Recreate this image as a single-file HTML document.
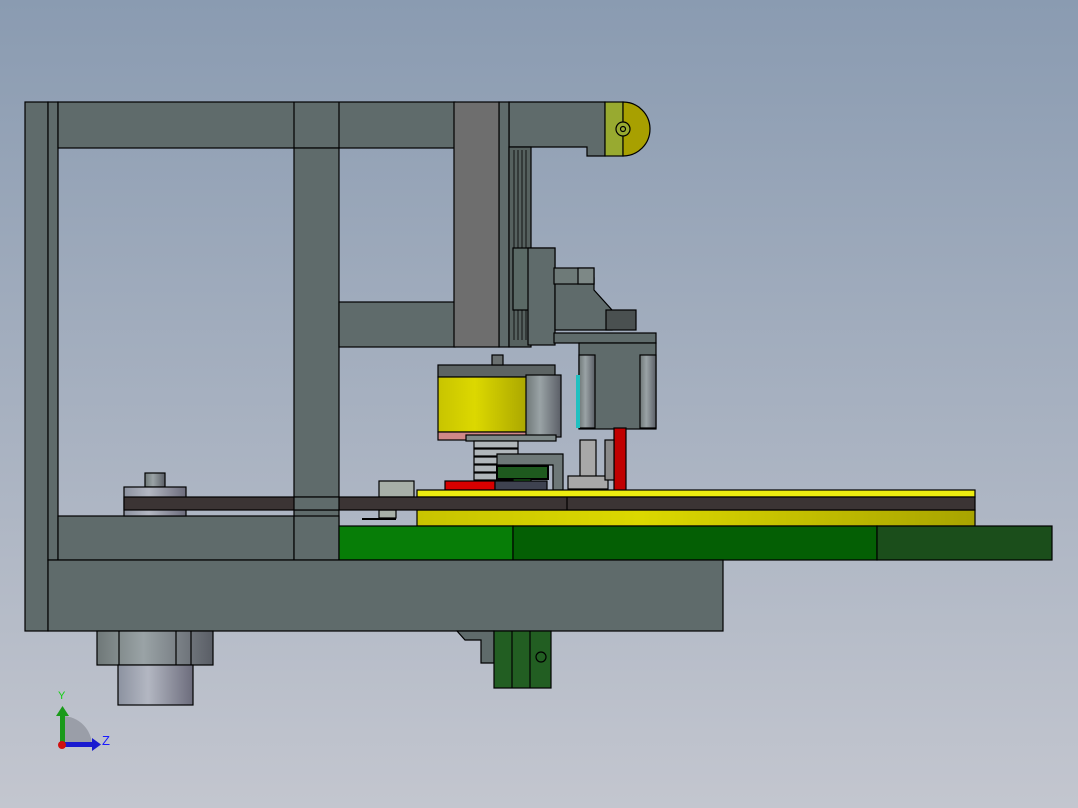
<!DOCTYPE html>
<html><head><style>html,body{margin:0;padding:0;width:1078px;height:808px;overflow:hidden}</style></head>
<body>
<svg width="1078" height="808" viewBox="0 0 1078 808" xmlns="http://www.w3.org/2000/svg" stroke="#000" stroke-width="1.2">
<defs>
<linearGradient id="bg" x1="0" y1="0" x2="0" y2="1"><stop offset="0" stop-color="#8a9bb1"/><stop offset="1" stop-color="#c3c6cf"/></linearGradient>
<linearGradient id="yel" x1="0" y1="0" x2="1" y2="0"><stop offset="0" stop-color="#c8c400"/><stop offset="0.4" stop-color="#dcd800"/><stop offset="1" stop-color="#a8a400"/></linearGradient>
<linearGradient id="cyl" x1="0" y1="0" x2="1" y2="0"><stop offset="0" stop-color="#6f7878"/><stop offset="0.4" stop-color="#9aa3a6"/><stop offset="1" stop-color="#5a5e66"/></linearGradient>
<linearGradient id="cyl2" x1="0" y1="0" x2="1" y2="0"><stop offset="0" stop-color="#8c92a0"/><stop offset="0.4" stop-color="#b3b7c2"/><stop offset="1" stop-color="#6c6c7c"/></linearGradient>
</defs>
<rect width="1078" height="808" fill="url(#bg)" stroke="none"/>
<g fill="#5f6b6b">
<rect x="25" y="102" width="23" height="529"/>
<rect x="48" y="102" width="10" height="458"/>
<rect x="58" y="102" width="397" height="46"/>
<line x1="294" y1="102" x2="294" y2="148"/><line x1="339" y1="102" x2="339" y2="148"/>
<rect x="294" y="148" width="45" height="412"/>
<rect x="339" y="302" width="116" height="45"/>
<path d="M509 102 H605 V156 H587 V147 H509 Z"/>
<rect x="499" y="102" width="10" height="245"/>
<rect x="509" y="147" width="22" height="200" fill="#56615f"/>
<rect x="58" y="516" width="236" height="44"/>
<rect x="294" y="516" width="45" height="44"/>
</g>
<rect x="454" y="102" width="45" height="245" fill="#6e6e6e"/>
<g stroke-width="0.8"><line x1="514" y1="150" x2="514" y2="340"/><line x1="518" y1="150" x2="518" y2="340"/><line x1="522" y1="150" x2="522" y2="340"/><line x1="526" y1="150" x2="526" y2="340"/></g>
<rect x="605" y="102" width="18" height="54" fill="#98aa30"/>
<path d="M623 102 A27 27 0 0 1 623 156 Z" fill="#a8a000"/>
<circle cx="623" cy="129" r="7" fill="#98aa30"/><circle cx="623" cy="129" r="2.5" fill="none"/>
<!-- slider block -->
<rect x="513" y="248" width="42" height="62" fill="#5b6a66"/>
<rect x="528" y="248" width="27" height="97" fill="#5f6b6b"/>
<path d="M555 278 H594 V290 L612 310 V330 H555 Z" fill="#5f6b6b"/>
<rect x="554" y="268" width="40" height="16" fill="#6e7a78"/>
<rect x="578" y="268" width="16" height="16" fill="#7d8886"/>
<rect x="606" y="310" width="30" height="20" fill="#4a5050"/>
<rect x="554" y="333" width="102" height="10" fill="#5f6b6b"/>
<rect x="579" y="343" width="77" height="86" fill="#5f6b6b"/>
<rect x="579" y="355" width="16" height="73" fill="url(#cyl)"/><rect x="640" y="355" width="16" height="73" fill="url(#cyl)"/>
<rect x="576" y="375" width="4" height="53" fill="#20c0c0" stroke="none"/>
<!-- motor -->
<rect x="438" y="365" width="117" height="12" fill="#5d6464"/>
<rect x="438" y="377" width="92" height="55" fill="url(#yel)"/>
<rect x="438" y="432" width="92" height="8" fill="#d08888"/>
<rect x="526" y="375" width="35" height="62" fill="url(#cyl)"/>
<rect x="492" y="355" width="11" height="10" fill="#6a7070"/>
<rect x="466" y="435" width="90" height="6" fill="#7f8a8a"/>
<g fill="#b0b6ba"><rect x="474" y="441" width="44" height="7"/><rect x="474" y="449" width="44" height="7"/><rect x="474" y="457" width="44" height="7"/><rect x="474" y="465" width="44" height="7"/><rect x="474" y="473" width="44" height="7"/><rect x="474" y="481" width="44" height="8"/></g>
<path d="M497 454 H563 V490 H553 V465 H497 Z" fill="#6e7878"/>
<rect x="497" y="466" width="51" height="13" fill="#1e5a1e" stroke-width="2"/>
<rect x="513" y="479" width="18" height="12" fill="#2a8a2a"/>
<rect x="445" y="481" width="50" height="9" fill="#d80000"/>
<rect x="495" y="481" width="52" height="9" fill="#3e4250"/>
<!-- bracket -->
<rect x="580" y="440" width="16" height="45" fill="#a8a8a8"/>
<rect x="568" y="476" width="40" height="13" fill="#a8a8a8"/>
<rect x="614" y="428" width="12" height="64" fill="#c00000"/>
<rect x="605" y="440" width="9" height="40" fill="#8a8a8a"/>
<!-- left clamp -->
<rect x="379" y="481" width="35" height="16" fill="#a8b0a8"/>
<rect x="379" y="510" width="17" height="8" fill="#a8b0a8"/>
<line x1="362" y1="519" x2="396" y2="519" stroke-width="2"/>
<!-- pulley -->
<rect x="145" y="473" width="20" height="14" fill="url(#cyl)"/>
<rect x="124" y="487" width="62" height="29" fill="url(#cyl2)"/>
<!-- yellow disc -->
<rect x="417" y="490" width="558" height="7" fill="#ecec10"/>
<rect x="417" y="510" width="558" height="16" fill="url(#yel)"/>
<rect x="124" y="497" width="851" height="13" fill="#3b3434"/>
<rect x="294" y="497" width="45" height="13" fill="#5f6b6b"/>
<line x1="567" y1="497" x2="567" y2="510"/>
<!-- green -->
<rect x="339" y="526" width="174" height="34" fill="#077d07"/>
<rect x="513" y="526" width="364" height="34" fill="#045f04"/>
<rect x="877" y="526" width="175" height="34" fill="#1b4e1b"/>
<!-- base -->
<rect x="48" y="560" width="675" height="71" fill="#5f6b6b"/>
<rect x="97" y="631" width="116" height="34" fill="url(#cyl)"/>
<line x1="119" y1="631" x2="119" y2="665"/><line x1="176" y1="631" x2="176" y2="665"/><line x1="191" y1="631" x2="191" y2="665"/>
<rect x="118" y="665" width="75" height="40" fill="url(#cyl2)"/>
<path d="M457 631 L465 640 H481 V663 H494 V631 Z" fill="#5f6b6b"/>
<rect x="494" y="631" width="57" height="57" fill="#225e22"/>
<line x1="512" y1="631" x2="512" y2="688"/><line x1="530" y1="631" x2="530" y2="688"/>
<circle cx="541" cy="657" r="5" fill="none"/>
<!-- triad -->
<path d="M62 747 A33 33 0 0 1 95 740 L62 740 Z" fill="none" stroke="none"/>
<path d="M62 716 A30 30 0 0 1 92 746 L62 746 Z" fill="#9a9ea8" stroke="none"/>
<rect x="60" y="714" width="5" height="32" fill="#1a9a1a" stroke="none"/>
<path d="M56 716 L62.5 706 L69 716 Z" fill="#1a9a1a" stroke="none"/>
<rect x="62" y="742" width="32" height="5" fill="#1a1ad0" stroke="none"/>
<path d="M92 738 L101 744.5 L92 751 Z" fill="#1a1ad0" stroke="none"/>
<circle cx="62" cy="745" r="4" fill="#d01010" stroke="none"/>
<text x="58" y="699" font-family="Liberation Sans, sans-serif" font-size="11" fill="#10d010" stroke="none">Y</text>
<text x="102" y="745" font-family="Liberation Sans, sans-serif" font-size="13" fill="#1a1aff" stroke="none">Z</text>
</svg>
</body></html>
